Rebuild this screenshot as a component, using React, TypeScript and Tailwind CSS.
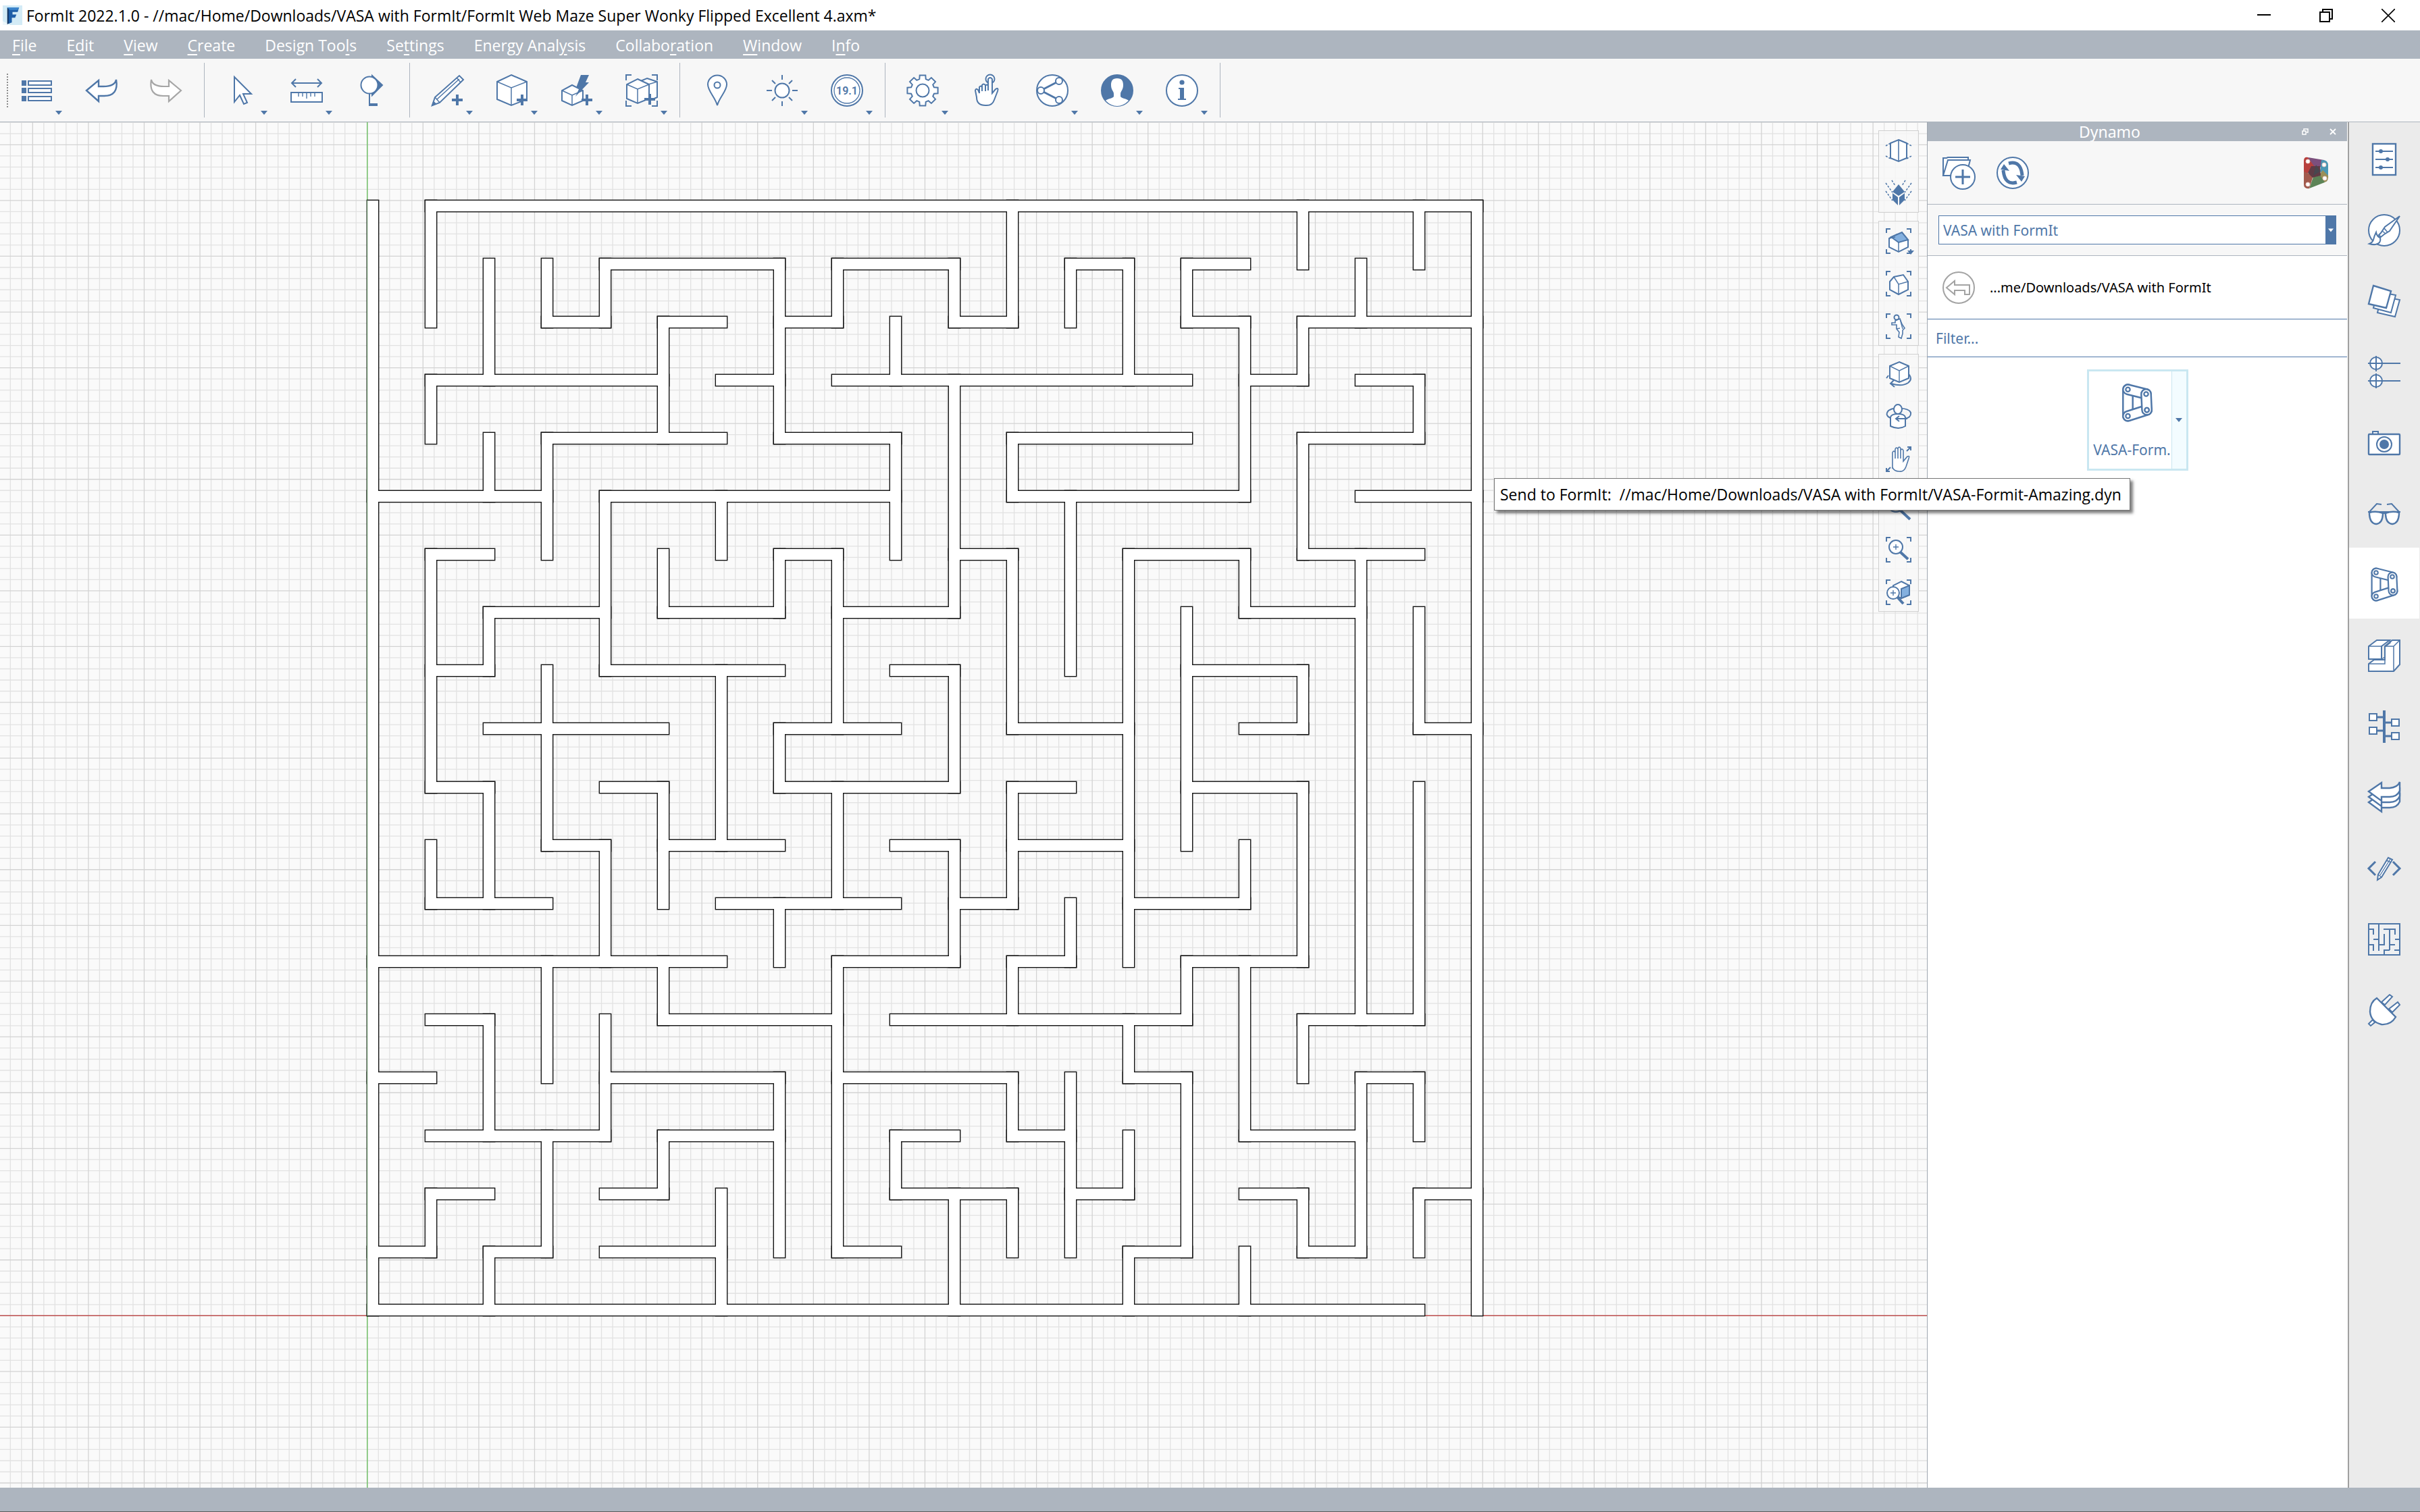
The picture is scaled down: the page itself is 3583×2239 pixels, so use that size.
import React from 'react';

const BLUE = '#4f77a8';

type IconProps = { box?: number; className?: string; color?: string; children: React.ReactNode };

const Icon: React.FC<IconProps> = ({ box = 48, className = 'size-12', color = BLUE, children }) => (
  <svg
    viewBox={`0 0 ${box} ${box}`}
    className={`${className} shrink-0 overflow-visible`}
    fill="#fff"
    stroke={color}
    strokeWidth={2}
    aria-hidden="true"
  >
    {children}
  </svg>
);

const Plus = () => <path d="M39 30V46M31 38H47" strokeWidth={4} fill="none" />;

const gearPath = () => {
  const pts: string[] = [];
  for (let i = 0; i < 8; i++) {
    const a = (i * Math.PI) / 4 - Math.PI / 2;
    [[-0.27, 17.5], [-0.19, 23], [0.19, 23], [0.27, 17.5]].forEach(([d, r]) => {
      pts.push(`${(24 + r * Math.cos(a + d)).toFixed(1)} ${(24 + r * Math.sin(a + d)).toFixed(1)}`);
    });
  }
  return `M${pts.join('L')}Z`;
};

/* ---------- main toolbar ---------- */

const ListIcon = () => (
  <Icon>
    {[9, 20, 32].map((y) => (
      <g key={y}>
        <rect x="2" y={y} width="7" height="8" fill={BLUE} stroke="none" />
        <rect x="12" y={y + 1} width="34" height="6" />
      </g>
    ))}
  </Icon>
);

const ARROW = 'M2 24L20 9V18H27Q44 18 46 8Q50 32 28 32H20V40Z';

const UndoIcon = () => <Icon><path d={ARROW} strokeWidth={2.4} /></Icon>;
const RedoIcon = () => (
  <Icon color="#a6a6a6"><path d={ARROW} transform="matrix(-1 0 0 1 48 0)" strokeWidth={2.2} /></Icon>
);

const CursorIcon = () => <Icon><path d="M13 4V41L21 31L27 44L32 42L26 29L38 29Z" /></Icon>;

const MeasureIcon = () => (
  <Icon>
    <path d="M2 13H46M8 7L2 13L8 19M40 7L46 13L40 19" fill="none" />
    <rect x="1" y="27" width="46" height="14" />
    <path d="M12 28V33M18 28V33M24 28V36M30 28V33M36 28V33" strokeWidth={1.4} />
  </Icon>
);

const SectionIcon = () => (
  <Icon>
    <path d="M25 2L40 16L25 31Z" fill={BLUE} />
    <circle cx="21" cy="16" r="12.5" />
    <path d="M21 29V46" />
    <path d="M20 45H33" strokeWidth={4} />
  </Icon>
);

const PencilPlusIcon = () => (
  <Icon>
    <path d="M2 46L6 34L42 2L48 8L13 42Z" />
    <path d="M6 34L13 42M9 37L42 7M38 5L44 12" strokeWidth={1.5} />
    <path d="M2 46L4 41L7 44Z" fill={BLUE} />
    <Plus />
  </Icon>
);

const BoxPlusIcon = () => (
  <Icon>
    <path d="M23 1L46 11V37L23 46L2 37V11Z" />
    <path d="M2 11L23 20L46 11M23 20V46" fill="none" strokeWidth={1.5} />
    <Plus />
  </Icon>
);

const QuickBoxIcon = () => (
  <Icon>
    <path d="M17 16L33 24V39L17 46L2 39V24Z" />
    <path d="M2 24L17 31L33 24M17 31V46" fill="none" strokeWidth={1.5} />
    <path d="M30 1H42L37 12H42L22 33L28 20H23Z" fill={BLUE} stroke="none" />
    <Plus />
  </Icon>
);

const CORNERS = 'M1 9V1H9M39 1H47V9M47 39V47H39M9 47H1V39';

const GroupIcon = () => (
  <Icon>
    <path d={CORNERS} fill="none" />
    <path d="M32 6L47 11V34L36 39L20 30V11Z" />
    <path d="M20 11L34 15L47 11" fill="none" strokeWidth={1.4} />
    <path d="M18 7L35 15V36L18 43L2 36V15Z" />
    <path d="M2 15L18 22L35 15M18 22V43" fill="none" strokeWidth={1.5} />
    <path d="M36 29V45M28 37H44" strokeWidth={4} />
  </Icon>
);

const PinIcon = () => (
  <Icon>
    <path d="M24 46C21 34 10 25 10 15A14 13.500 0 0 1 38 15C38 25 27 34 24 46Z" />
    <circle cx="24" cy="16" r="4.500" />
  </Icon>
);

const SunIcon = () => (
  <Icon>
    <circle cx="24" cy="24" r="10.500" />
    <path d="M24 1V8M24 40V47M1 24H9M39 24H47M9 9L14 14M34 34L39 39M39 9L34 14M14 34L9 39" />
  </Icon>
);

const VersionIcon = () => (
  <Icon>
    <circle cx="24" cy="24" r="23" />
    <circle cx="24" cy="24" r="19" strokeWidth={1.3} />
    <text
      x="24"
      y="30"
      textAnchor="middle"
      fontSize="16"
      fontWeight="600"
      fill={BLUE}
      stroke="none"
      fontFamily="Roboto, 'Liberation Sans', sans-serif"
    >
      19.1
    </text>
  </Icon>
);

const GearIcon = () => (
  <Icon>
    <path d={gearPath()} />
    <circle cx="24" cy="24" r="9.500" />
  </Icon>
);

const TouchIcon = () => (
  <Icon>
    <circle cx="28" cy="7" r="6.500" />
    <path d="M25 24V7Q28 3 31 7V28L36 22Q41 19 39 25L34 38Q31 47 21 46Q8 46 8 34L6 24Q7 20 10 23L12 28V19Q14 16 16 19V25V16Q18 13 21 16V25V17Q23 14 25 17Z" />
  </Icon>
);

const ShareIcon = () => (
  <Icon>
    <circle cx="24" cy="24" r="23" />
    <path d="M7 24L34 10M7 24L34 38" strokeWidth={3} />
    <circle cx="7" cy="24" r="5" />
    <circle cx="34" cy="10" r="5" />
    <circle cx="34" cy="38" r="5" />
  </Icon>
);

const UserIcon = () => (
  <Icon>
    <circle cx="24" cy="24" r="23" fill={BLUE} />
    <path
      d="M24 6C31 6 33 10 33 16C33 23 29 25 29 29V33C31 36 38 36 41 39Q33 47 24 47Q15 47 7 39C10 36 17 36 19 33V29C19 25 15 23 15 16C15 10 17 6 24 6Z"
      stroke="none"
    />
  </Icon>
);

const InfoIcon = () => (
  <Icon>
    <circle cx="24" cy="24" r="23" />
    <circle cx="24" cy="12" r="3.600" fill={BLUE} stroke="none" />
    <path d="M19 20H27V36H30V38H18V36H21V22H19Z" fill={BLUE} stroke="none" />
  </Icon>
);

/* ---------- side tab strip ---------- */

const PropertiesIcon = () => (
  <Icon>
    <rect x="7" y="1" width="34" height="46" strokeWidth={2.400} />
    <path d="M11 12H37M11 24H37M11 36H37" />
    <g fill={BLUE} stroke="none">
      <circle cx="19" cy="12" r="3" />
      <circle cx="29" cy="24" r="3" />
      <circle cx="19" cy="36" r="3" />
    </g>
  </Icon>
);

const MaterialsIcon = () => (
  <Icon>
    <circle cx="24" cy="24" r="23" />
    <path d="M47 3L25 19L19 28L16 31L19 34L24 30L32 25Z" />
    <path d="M21 25L26 29M24 21L29 27" strokeWidth={1.600} />
    <path d="M12 27Q9 33 8 38Q7 42 2 44Q12 47 17 42Q19 39 18 35Q13 33 12 27Z" />
  </Icon>
);

const LayersIcon = () => (
  <Icon>
    <path d="M20 17L47 22L40 47L14 41Z" />
    <path d="M14 10L41 15L34 41L8 34Z" />
    <path d="M8 1L34 9L27 34L1 28Z" strokeWidth={2.400} />
  </Icon>
);

const LevelsIcon = () => (
  <Icon>
    <circle cx="12" cy="11" r="9" />
    <circle cx="12" cy="37" r="9" />
    <path d="M0 11H48M0 37H48M12 0V23M12 26V48" />
  </Icon>
);

const CameraIcon = () => (
  <Icon>
    <path d="M7 11V7H15V11" />
    <rect x="1" y="11" width="46" height="30" rx="1" strokeWidth={2.400} />
    <circle cx="24" cy="26" r="11" />
    <circle cx="24" cy="26" r="7" fill={BLUE} stroke="none" />
  </Icon>
);

const GlassesIcon = () => (
  <Icon>
    <path d="M1 22L13 9L20 10M47 22L35 9L28 10" fill="none" />
    <path d="M2 22Q12 19 22 23Q22 38 12 39Q2 38 2 22ZM46 22Q36 19 26 23Q26 38 36 39Q46 38 46 22Z" strokeWidth={2.400} />
    <path d="M0 21H48M21 24Q24 22 27 24" fill="none" />
  </Icon>
);

const LINKS = [
  [12, 6, 12, 41],
  [12, 6, 36, 12],
  [12, 41, 37, 33],
  [36, 12, 37, 33],
];

const DynamoIcon = ({ className }: { className?: string }) => (
  <Icon className={className}>
    {LINKS.map(([x1, y1, x2, y2], i) => (
      <g key={i} strokeLinecap="round">
        <line x1={x1} y1={y1} x2={x2} y2={y2} strokeWidth={15} />
        <line x1={x1} y1={y1} x2={x2} y2={y2} strokeWidth={10.600} stroke="#fff" />
      </g>
    ))}
    {LINKS.map(([, , x, y], i) => (
      <circle key={i} cx={x} cy={y} r="2.800" />
    ))}
    <circle cx="12" cy="6" r="2.800" />
  </Icon>
);

const SectionBoxIcon = () => (
  <Icon>
    <path d="M1 36L9 30H25V10L36 1H47V37L38 47H1Z" />
    <path d="M1 36H25V10H38V47M38 10L47 1" fill="none" strokeWidth={1.500} />
    <path d="M1 10L13 1H32L20 10V29H1Z" />
    <path d="M1 10H20M32 1L33 5L25 11V26L20 29" fill="none" strokeWidth={1.400} />
  </Icon>
);

const TreeIcon = () => (
  <Icon>
    <path d="M13 10H24M24 18H35M13 30H24M24 38H35" strokeWidth={3} />
    <path d="M24 0V48" strokeWidth={4} />
    <rect x="2" y="5" width="11" height="10" />
    <rect x="35" y="13" width="11" height="10" />
    <rect x="2" y="25" width="11" height="10" />
    <rect x="35" y="33" width="11" height="10" />
  </Icon>
);

const VersionsIcon = () => (
  <Icon>
    {[16, 8, 0].map((dy) => (
      <path
        key={dy}
        d="M1 15L20 2V10H32Q44 9 47 1V14Q43 23 32 23H20V29Z"
        transform={`translate(0 ${dy})`}
        strokeWidth={2.400}
      />
    ))}
  </Icon>
);

const ScriptIcon = () => (
  <Icon>
    <path d="M11 14L1 24L11 34M37 14L47 24L37 34" fill="none" strokeWidth={3} />
    <path d="M14 41L15 33L30 8L36 11L20 37Z" />
    <path d="M15 33L20 37M18 34L33 10M27 12L34 15" strokeWidth={1.400} />
  </Icon>
);

const MazeIcon = () => (
  <Icon>
    <rect x="1" y="1" width="46" height="46" fill="#eef0f2" />
    <path
      d="M1 9H8V17M8 24H16M1 32H8V41M16 1V41M23 9H40V17M32 9V40M24 16V32H16M40 24H47M32 32H40M24 47V40H32M39 40H47"
      fill="none"
    />
  </Icon>
);

const PlugIcon = () => (
  <Icon>
    <path d="M20 12L32 1L36 4L25 16ZM31 22L44 12L47 16L36 27ZM1 44L7 38L10 42L4 47Z" />
    <path d="M13 6L41 34Q34 46 20 45Q4 41 3 26Q3 12 13 6Z" strokeWidth={2.400} />
  </Icon>
);

/* ---------- viewport navigation ---------- */

const NAV_CORNERS = 'M1 7V1H7M31 1H37V7M37 31V37H31M7 37H1V31';

const NavIcon: React.FC<{ frame?: boolean; children: React.ReactNode }> = ({ frame, children }) => (
  <Icon box={38} className="size-[38px]">
    {frame && <path d={NAV_CORNERS} fill="none" />}
    {children}
  </Icon>
);

const OrthoIcon = () => (
  <NavIcon>
    <path d="M19 3L31 8V30L19 35L7 30V8Z" />
    <path d="M19 3V35" strokeWidth={1.600} />
    <path d="M0 12L7 8M31 8L38 12M0 27L7 31M31 31L38 27" strokeDasharray="3 2" strokeWidth={1.500} />
  </NavIcon>
);

const PerspectiveIcon = () => (
  <NavIcon>
    <path d="M0 4L10 18M38 4L28 18M0 16L10 30M38 16L28 30M9 0L14 8M29 0L24 8" fill="none" strokeDasharray="3 2" strokeWidth={1.500} />
    <path d="M19 6L28 17L19 23L10 17Z" fill={BLUE} stroke="none" />
    <path d="M10 19L18 25V37L10 29ZM28 19L20 25V37L28 29Z" fill={BLUE} stroke="none" />
  </NavIcon>
);

const TopViewIcon = () => (
  <NavIcon frame>
    <path d="M5 15L17 9L33 18V28L19 35L5 28Z" />
    <path d="M8 13L24 6L33 17L19 21Z" fill="#84b0df" />
    <path d="M19 21V35M5 15L14 13" strokeWidth={1.500} />
    <path d="M32 33H42L37 39Z" fill={BLUE} stroke="none" />
  </NavIcon>
);

const HomeViewIcon = () => (
  <NavIcon frame>
    <path d="M6 16L12 9L26 6L33 16V28L19 35L6 28Z" />
    <path d="M12 9L19 20L33 16M19 20V35" fill="none" strokeWidth={1.500} />
  </NavIcon>
);

const WalkIcon = () => (
  <NavIcon frame>
    <circle cx="16" cy="6" r="3.500" />
    <path d="M14 11L21 8L24 16L28 22L25 25V30L23 37L19 35L20 28L16 23V17L9 17V14H14Z" strokeWidth={1.600} />
    <path d="M21 8L25 23M16 23L21 22" strokeWidth={1.400} />
  </NavIcon>
);

const OrbitIcon = () => (
  <NavIcon>
    <path d="M33 18Q41 26 33 32Q24 38 8 33M12 28L7 33L13 38M4 21L1 25" fill="none" />
    <path d="M20 1L34 7V25L20 31L6 25V7Z" />
    <path d="M6 7L20 14L34 7M20 14V31" fill="none" strokeWidth={1.400} />
  </NavIcon>
);

const LookIcon = () => (
  <NavIcon>
    <path d="M7 21Q-2 17 4 10Q10 6 18 7Q34 6 37 13Q38 21 27 22" fill="none" />
    <path d="M7 20Q8 15 18 15Q28 15 29 20V33Q19 39 7 33Z" />
    <ellipse cx="18" cy="8" rx="6" ry="7" />
    <path d="M32 22H15M20 18L15 22L20 26" fill="none" />
  </NavIcon>
);

const PanIcon = () => (
  <NavIcon>
    <path d="M10 33V9Q12 5 14 9V18V4Q16 0 18 4V18V3Q20 -1 22 3V18V6Q24 2 26 6V22L32 15Q36 13 34 18L30 30Q27 38 20 37Q12 37 10 31Z" strokeWidth={1.600} />
    <path d="M31 7L37 1M32 1H37V6M7 31L1 37M1 32V37H6" fill="none" />
  </NavIcon>
);

const ZoomIcon = () => (
  <NavIcon>
    <path d="M22 24L36 37" strokeWidth={4} />
    <circle cx="15" cy="14" r="12" />
  </NavIcon>
);

const ZoomFitIcon = () => (
  <NavIcon frame>
    <path d="M21 22L33 33" strokeWidth={4} />
    <circle cx="15" cy="15" r="10" />
    <path d="M15 11V19M11 15H19" strokeWidth={1.400} />
  </NavIcon>
);

const ZoomSelectionIcon = () => (
  <NavIcon frame>
    <path d="M23 3L35 9V23L23 28L11 22V9Z" />
    <path d="M23 14L35 9V23L23 28Z" fill="#84b0df" />
    <path d="M17 26L26 36" strokeWidth={4} />
    <circle cx="11" cy="20" r="9" />
    <path d="M11 16V24M7 20H15" strokeWidth={1.400} />
  </NavIcon>
);

/* ---------- drawing ---------- */

// wall runs per lattice line, [from, to] in cells
const ROWS: number[][][] = [
  [[1, 19]],
  [[4, 7], [8, 10], [12, 13], [14, 15]],
  [[3, 4], [5, 6], [7, 8], [10, 11], [14, 15], [16, 19]],
  [[1, 5], [6, 7], [8, 14], [15, 16], [17, 18]],
  [[3, 6], [7, 9], [11, 14], [16, 18]],
  [[0, 3], [4, 9], [11, 15], [17, 19]],
  [[1, 2], [7, 8], [10, 11], [13, 15], [16, 18]],
  [[2, 4], [5, 7], [8, 10], [15, 17]],
  [[1, 2], [4, 7], [9, 10], [14, 16]],
  [[2, 5], [7, 9], [11, 13], [15, 16], [18, 19]],
  [[1, 2], [4, 5], [7, 10], [11, 12], [14, 16]],
  [[3, 4], [5, 7], [9, 10], [11, 13]],
  [[1, 3], [6, 9], [10, 11], [13, 15]],
  [[0, 6], [8, 10], [11, 12], [14, 16]],
  [[1, 2], [5, 8], [9, 14], [16, 18]],
  [[0, 1], [4, 7], [8, 11], [13, 14], [17, 18]],
  [[1, 4], [5, 7], [9, 10], [11, 12], [15, 17]],
  [[1, 2], [4, 5], [9, 11], [12, 13], [15, 16], [18, 19]],
  [[0, 1], [2, 3], [4, 6], [8, 9], [13, 14], [16, 17]],
  [[0, 18]],
];

const COLS: number[][][] = [
  [[0, 19]],
  [[0, 2], [3, 4], [6, 10], [11, 12], [17, 18]],
  [[1, 3], [4, 5], [7, 8], [10, 12], [14, 16], [18, 19]],
  [[1, 2], [4, 6], [8, 11], [13, 15], [16, 18]],
  [[1, 2], [5, 8], [11, 13], [14, 16]],
  [[2, 4], [6, 7], [10, 12], [13, 14], [16, 17]],
  [[5, 6], [8, 11], [17, 19]],
  [[1, 4], [6, 7], [9, 10], [12, 13], [15, 18]],
  [[1, 2], [6, 9], [10, 12], [13, 18]],
  [[2, 3], [4, 6], [16, 17]],
  [[1, 2], [3, 7], [8, 10], [11, 13], [17, 19]],
  [[0, 2], [4, 5], [6, 9], [10, 12], [13, 14], [15, 16], [17, 18]],
  [[1, 2], [5, 8], [12, 13], [15, 18]],
  [[1, 3], [6, 13], [14, 15], [16, 17], [18, 19]],
  [[1, 2], [7, 11], [13, 14], [15, 18]],
  [[2, 5], [6, 7], [11, 12], [13, 16], [18, 19]],
  [[0, 1], [2, 3], [4, 6], [8, 9], [10, 13], [14, 15], [17, 18]],
  [[1, 2], [6, 14], [15, 18]],
  [[0, 1], [3, 4], [7, 9], [10, 14], [15, 16], [17, 18]],
  [[0, 19]],
];

const PITCH = 86.05;
const WALL = 18;
const SPREAD = 0.4;
const wallX = (i: number) => Math.round(543 + i * PITCH);
const wallY = (j: number) => Math.round(115 + j * PITCH);

const walls = [
  ...ROWS.flatMap((runs, j) =>
    runs.map(([a, b]) => ({ x: wallX(a), y: wallY(j), w: wallX(b) - wallX(a) + WALL, h: WALL }))
  ),
  ...COLS.flatMap((runs, i) =>
    runs.map(([a, b]) => ({ x: wallX(i), y: wallY(a), w: WALL, h: wallY(b) - wallY(a) + WALL }))
  ),
];

const ORIGIN = { x: 543.75, y: 1767.3 };
const UNIT = 16.514;

const gridPath = (major: boolean) => {
  let d = '';
  for (let k = -110; k <= 240; k++) {
    if ((k % 5 === 0) !== major) continue;
    const x = (ORIGIN.x + k * UNIT).toFixed(2);
    const y = (ORIGIN.y + k * UNIT).toFixed(2);
    d += `M${x} 0V4000M0 ${y}H4000`;
  }
  return d;
};

const Drawing = () => (
  <svg className="absolute inset-0 h-full w-full" role="img" aria-label="Maze floor plan">
    <path d={gridPath(false)} stroke="#e2e2e2" strokeWidth="1.3" />
    <path d={gridPath(true)} stroke="#d3d3d3" strokeWidth="1.3" />
    <rect x="0" y="1766.5" width="100%" height="1.5" fill="#bd4f4e" />
    <rect x="543" y="0" width="1.5" height="100%" fill="#74c26a" />
    {walls.map((r, i) => (
      <rect
        key={i}
        x={r.x - SPREAD}
        y={r.y - SPREAD}
        width={r.w + 2 * SPREAD}
        height={r.h + 2 * SPREAD}
        fill="#141414"
      />
    ))}
    {walls.map((r, i) => (
      <rect key={i} x={r.x + 1} y={r.y + 1} width={r.w - 2} height={r.h - 2} fill="#fff" />
    ))}
    <rect x="543" y="115" width="1" height="1653" fill="#3d6a3d" />
  </svg>
);

/* ---------- chrome ---------- */

// the underlined letter is the keyboard mnemonic
const MENUS = [
  ['', 'F', 'ile'],
  ['E', 'd', 'it'],
  ['', 'V', 'iew'],
  ['', 'C', 'reate'],
  ['Design Too', 'l', 's'],
  ['Se', 't', 'tings'],
  ['Energy Anal', 'y', 'sis'],
  ['Collabo', 'r', 'ation'],
  ['', 'W', 'indow'],
  ['I', 'n', 'fo'],
];

type Tool = { label: string; icon: React.FC; menu?: boolean };

const TOOL_GROUPS: Tool[][] = [
  [
    { label: 'File', icon: ListIcon, menu: true },
    { label: 'Undo', icon: UndoIcon },
    { label: 'Redo', icon: RedoIcon },
  ],
  [
    { label: 'Select', icon: CursorIcon, menu: true },
    { label: 'Measure', icon: MeasureIcon, menu: true },
    { label: 'Section plane', icon: SectionIcon },
  ],
  [
    { label: 'Sketch', icon: PencilPlusIcon, menu: true },
    { label: 'Primitives', icon: BoxPlusIcon, menu: true },
    { label: 'Quick modeling', icon: QuickBoxIcon, menu: true },
    { label: 'Group', icon: GroupIcon, menu: true },
  ],
  [
    { label: 'Location', icon: PinIcon },
    { label: 'Sun and shadows', icon: SunIcon, menu: true },
    { label: 'Energy analysis', icon: VersionIcon, menu: true },
  ],
  [
    { label: 'Settings', icon: GearIcon, menu: true },
    { label: 'Touch mode', icon: TouchIcon },
    { label: 'Collaborate', icon: ShareIcon, menu: true },
    { label: 'Account', icon: UserIcon, menu: true },
    { label: 'Help', icon: InfoIcon, menu: true },
  ],
];

const SIDE_TABS: { label: string; icon: React.FC<{ className?: string }> }[] = [
  { label: 'Properties', icon: PropertiesIcon },
  { label: 'Materials', icon: MaterialsIcon },
  { label: 'Layers', icon: LayersIcon },
  { label: 'Levels', icon: LevelsIcon },
  { label: 'Scenes', icon: CameraIcon },
  { label: 'Visual styles', icon: GlassesIcon },
  { label: 'Dynamo', icon: DynamoIcon },
  { label: 'Section boxes', icon: SectionBoxIcon },
  { label: 'Groups tree', icon: TreeIcon },
  { label: 'Undo manager', icon: VersionsIcon },
  { label: 'Script editor', icon: ScriptIcon },
  { label: 'Maze generator', icon: MazeIcon },
  { label: 'Plugins', icon: PlugIcon },
];

const NAV_GROUPS: { label: string; icon: React.FC; spaced?: boolean }[][] = [
  [
    { label: 'Orthographic', icon: OrthoIcon },
    { label: 'Perspective', icon: PerspectiveIcon },
  ],
  [
    { label: 'Top view', icon: TopViewIcon },
    { label: 'Home view', icon: HomeViewIcon },
    { label: 'Walk', icon: WalkIcon },
  ],
  [
    { label: 'Orbit', icon: OrbitIcon },
    { label: 'Look around', icon: LookIcon },
    { label: 'Pan', icon: PanIcon },
    { label: 'Zoom', icon: ZoomIcon, spaced: true },
    { label: 'Zoom all', icon: ZoomFitIcon },
    { label: 'Zoom selection', icon: ZoomSelectionIcon },
  ],
];

const Caret = ({ className = '' }: { className?: string }) => (
  <svg viewBox="0 0 10 6" className={`h-1.5 w-2.5 ${className}`} fill="currentColor" aria-hidden="true">
    <path d="M0 0H10L5 6Z" />
  </svg>
);

const TitleBar = () => (
  <header className="flex h-[45px] shrink-0 items-center bg-white pl-1">
    <svg viewBox="0 0 30 30" className="size-[29px]" aria-hidden="true">
      <rect width="30" height="30" fill="#d3ebf6" />
      <path d="M0 24L12 30H0Z" fill="#eef8fc" />
      <path d="M7 3L11 6V27L7 29Z" fill="#12325c" />
      <path d="M7 3H25L23 10H15V14H21L19 19H14V26L9 28V6Z" fill="#1f5fa8" />
      <path d="M7 3H25L23 7H11Z" fill="#3b84cc" />
    </svg>
    <h1 className="ml-1.5 text-[23px] leading-8 text-black">
      FormIt 2022.1.0 - //mac/Home/Downloads/VASA with FormIt/FormIt Web Maze Super Wonky Flipped Excellent 4.axm*
    </h1>
    <div className="ml-auto flex h-full pr-px">
      <button aria-label="Minimize" className="flex w-[92px] items-center justify-center">
        <svg viewBox="0 0 20 20" className="size-5" stroke="#000" strokeWidth="2"><path d="M0 9H20" /></svg>
      </button>
      <button aria-label="Restore" className="flex w-[92px] items-center justify-center">
        <svg viewBox="0 0 20 20" className="size-5" stroke="#000" strokeWidth="2" fill="none">
          <path d="M5 5V1H19V15H16M1 5H15V19H1Z" />
        </svg>
      </button>
      <button aria-label="Close" className="flex w-[92px] items-center justify-center">
        <svg viewBox="0 0 20 20" className="size-5" stroke="#000" strokeWidth="1.600"><path d="M0 0L20 20M20 0L0 20" /></svg>
      </button>
    </div>
  </header>
);

const MenuBar = () => (
  <nav className="flex h-[42px] shrink-0 items-center gap-11 bg-[#adb5bf] pt-0.5 pl-[18px]">
    {MENUS.map(([before, key, after]) => (
      <button key={before + key + after} className="text-[23px] leading-8 text-white">
        {before}
        <span className="underline underline-offset-4">{key}</span>
        {after}
      </button>
    ))}
  </nav>
);

const Toolbar = () => (
  <div className="flex h-[94px] shrink-0 items-center border-b border-[#adb5bf] bg-[#f7f7f7] pl-1.5">
    {TOOL_GROUPS.map((group, g) => (
      <React.Fragment key={g}>
        {group.map(({ label, icon: Glyph, menu }, i) => (
          <button key={label} aria-label={label} className="relative flex h-[93px] w-24 items-center justify-center">
            {g === 0 && i === 0 && (
              <span className="absolute top-[22px] left-1 h-[50px] border-l-2 border-dotted border-[#8c8c8c]" />
            )}
            <Glyph />
            {menu && <Caret className="absolute right-2.5 bottom-2.5 text-[#4f77a8]" />}
          </button>
        ))}
        <span className="mr-[7px] ml-2 h-[81px] w-px bg-[#adb5bf]" />
      </React.Fragment>
    ))}
  </div>
);

const NavBar = () => (
  <div className="absolute top-3 right-3 flex flex-col gap-3">
    {NAV_GROUPS.map((group, g) => (
      <div key={g} className="flex w-[60px] flex-col gap-[5px] bg-[#f8f8f8]/80 pt-px ring-1 ring-[#d0d0d0] ring-inset">
        {group.map(({ label, icon: Glyph, spaced }) => (
          <button
            key={label}
            aria-label={label}
            className={`flex h-[58px] items-center justify-center ${spaced ? 'mt-2' : ''}`}
          >
            <Glyph />
          </button>
        ))}
      </div>
    ))}
  </div>
);

const DynamoLogo = () => (
  <svg viewBox="0 0 40 48" className="h-12 w-10" aria-hidden="true">
    <path d="M2 6Q2 0 8 1L20 12L8 24L2 40Z" fill="#b8403d" />
    <path d="M8 1L32 5L36 12L20 18Z" fill="#7c4f7d" />
    <path d="M28 5Q38 4 38 13V30L26 22Z" fill="#4a97b4" />
    <path d="M38 28Q39 37 32 38L22 30L30 20Z" fill="#9a8f58" />
    <path d="M33 38L10 47L16 30L26 28Z" fill="#5d8457" />
    <path d="M2 22L16 28L10 47Q2 48 2 41Z" fill="#a1594c" />
    <path d="M13 14L26 14L27 28L15 31L8 24Z" fill="#5f3b45" />
    <path d="M20 12L26 22L16 28Z" fill="#47474f" />
    <g fill="#fff" stroke="#e8c9c2">
      <circle cx="8" cy="7" r="3" />
      <circle cx="32" cy="12" r="3" />
      <circle cx="33" cy="32" r="3" />
      <circle cx="8" cy="41" r="3" />
    </g>
  </svg>
);

const DynamoPanel = () => (
  <aside className="flex w-[622px] shrink-0 flex-col border-l border-[#9fa7b0] bg-white font-['Noto_Sans','Liberation_Sans',sans-serif] text-[21px] leading-7 text-[#4f77a8]">
    <div className="flex h-7 items-center bg-[#adb5bf] text-white">
      <h2 className="flex-1 text-center text-[23px] leading-7">Dynamo</h2>
      <button aria-label="Float panel" className="flex w-10 justify-center">
        <svg viewBox="0 0 10 10" className="size-2.5" fill="none" stroke="#fff" strokeWidth="1.500">
          <path d="M3 4V1H9V6H7M1 4H6V9H1Z" />
        </svg>
      </button>
      <button aria-label="Close panel" className="flex w-[42px] justify-center">
        <svg viewBox="0 0 10 10" className="size-2.5" fill="none" stroke="#fff" strokeWidth="1.800">
          <path d="M1 1L9 9M9 1L1 9" />
        </svg>
      </button>
    </div>

    <div className="flex h-[94px] items-center gap-8 border-b border-[#adb5bf] bg-[#f7f7f7] pr-[26px] pl-[22px]">
      <button aria-label="Add folder">
        <Icon>
          <path d="M1 28V2H6L8 1H38V5" />
          <path d="M1 28L8 5H41L35 28Z" />
          <circle cx="30" cy="30" r="18" />
          <path d="M30 19V41M19 30H41" strokeWidth={3} />
        </Icon>
      </button>
      <button aria-label="Refresh">
        <Icon>
          <circle cx="24" cy="24" r="23" />
          <path d="M18 10Q36 5 38 28M30 38Q12 43 10 20" fill="none" strokeWidth={5} />
          <path d="M29 27L42 29L37 37ZM19 21L6 19L11 11Z" fill={BLUE} stroke="none" />
        </Icon>
      </button>
      <div className="ml-auto"><DynamoLogo /></div>
    </div>

    <div className="border-b border-[#adb5bf] bg-[#f7f7f7] p-4">
      <div className="relative">
        <select
          aria-label="Script folder"
          className="block h-[43px] w-full appearance-none border border-[#4f77a8] bg-white pl-1.5 outline-none"
        >
          <option>VASA with FormIt</option>
        </select>
        <span className="pointer-events-none absolute inset-y-0 right-0 flex w-4 items-center justify-center bg-[#4f77a8] text-white">
          <Caret className="px-px" />
        </span>
      </div>
    </div>

    <div className="flex h-[94px] items-center gap-[22px] border-b border-[#4f77a8] pl-[22px] text-black">
      <button aria-label="Parent folder">
        <Icon color="#a3a3a3">
          <circle cx="24" cy="24" r="23" />
          <path d="M6 24L18 14V20H40V34H33V28H18V34Z" />
        </Icon>
      </button>
      <span className="text-[20px]">...me/Downloads/VASA with FormIt</span>
    </div>

    <input
      type="text"
      aria-label="Filter scripts"
      placeholder="Filter..."
      className="h-14 border-b border-[#4f77a8] bg-white px-3 outline-none placeholder:text-[#4f77a8]"
    />

    <div className="flex justify-center pt-[18px]">
      <div className="flex size-[150px] border-[3px] border-[#c9e7f1]">
        <button className="flex flex-1 flex-col items-center pt-5">
          <DynamoIcon className="ml-5 size-[54px]" />
          <span className="mt-7 ml-1.5 whitespace-nowrap">VASA-Form.</span>
        </button>
        <button aria-label="Script options" className="flex w-[22px] items-center justify-center border-l border-[#c9e7f1] bg-[#f3fcff]">
          <Caret />
        </button>
      </div>
    </div>
  </aside>
);

const SideTabs = () => (
  <div className="ml-px flex w-[107px] shrink-0 flex-col border-l-2 border-[#a0a0a0] bg-[#ebebeb] pr-px">
    {SIDE_TABS.map(({ label, icon: Glyph }) => (
      <button
        key={label}
        aria-label={label}
        className={`flex h-[105px] items-center justify-center pt-1 ${label === 'Dynamo' ? 'bg-white' : ''}`}
      >
        <Glyph />
      </button>
    ))}
  </div>
);

const App: React.FC = () => (
  <div className="flex h-screen flex-col overflow-hidden bg-white font-['Open_Sans','Liberation_Sans',sans-serif]">
    <TitleBar />
    <MenuBar />
    <Toolbar />
    <div className="flex min-h-0 flex-1">
      <main className="relative min-w-0 flex-1 bg-[#fafafa]">
        <Drawing />
        <NavBar />
        <div
          role="tooltip"
          className="absolute top-[527px] left-[2212px] z-10 flex h-12 items-center border border-[#767676] bg-white pr-3 pl-2 text-[23px] leading-8 whitespace-pre text-black shadow-[4px_4px_4px_rgba(0,0,0,0.5)]"
        >
          {'Send to FormIt:  //mac/Home/Downloads/VASA with FormIt/VASA-Formit-Amazing.dyn'}
        </div>
      </main>
      <DynamoPanel />
      <SideTabs />
    </div>
    <footer className="h-9 shrink-0 border-b border-[#5c5c5c] bg-[#adb5bf]" />
  </div>
);

export default App;
